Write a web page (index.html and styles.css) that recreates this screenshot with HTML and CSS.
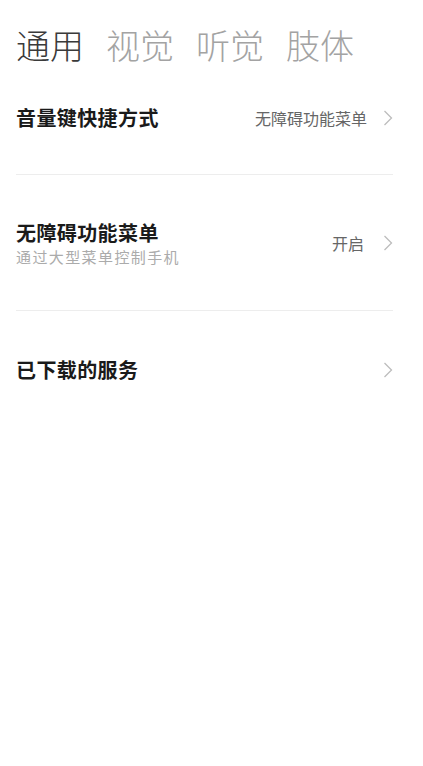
FILE: index.html
```html
<!DOCTYPE html>
<html lang="zh-CN">
<head>
<meta charset="utf-8">
<title>无障碍</title>
<link rel="stylesheet" href="styles.css">
</head>
<body>
<div class="page">
  <nav class="tabs">
    <span class="tab active">通用</span>
    <span class="tab">视觉</span>
    <span class="tab">听觉</span>
    <span class="tab">肢体</span>
  </nav>
  <div class="list">
    <div class="row row-first">
      <div class="text">
        <div class="title">音量键快捷方式</div>
      </div>
      <div class="right">
        <span class="value">无障碍功能菜单</span>
        <svg class="chev" width="10" height="16" viewBox="0 0 10 16"><path d="M1.5 1 L8.5 8 L1.5 15" fill="none" stroke="#bdbdbd" stroke-width="1.3"/></svg>
      </div>
    </div>
    <div class="row row-two">
      <div class="text">
        <div class="title">无障碍功能菜单</div>
        <div class="sub">通过大型菜单控制手机</div>
      </div>
      <div class="right">
        <span class="value">开启</span>
        <svg class="chev" width="10" height="16" viewBox="0 0 10 16"><path d="M1.5 1 L8.5 8 L1.5 15" fill="none" stroke="#bdbdbd" stroke-width="1.3"/></svg>
      </div>
    </div>
    <div class="row row-last">
      <div class="text">
        <div class="title">已下载的服务</div>
      </div>
      <div class="right">
        <svg class="chev" width="10" height="16" viewBox="0 0 10 16"><path d="M1.5 1 L8.5 8 L1.5 15" fill="none" stroke="#bdbdbd" stroke-width="1.3"/></svg>
      </div>
    </div>
  </div>
</div>
</body>
</html>
```
FILE: styles.css
```css
html, body {
  margin: 0;
  padding: 0;
  background: #ffffff;
}
body {
  font-family: "Noto Sans CJK SC", "Noto Sans", sans-serif;
  color: #1a1a1a;
}
.page {
  padding: 0 30px 0 16px;
}
.tabs {
  display: flex;
  gap: 22px;
  padding-top: 25px;
  font-size: 34px;
  line-height: 40px;
  font-weight: 300;
}
.tab {
  color: #a3a3a3;
}
.tab.active {
  color: #3a3a3a;
}
.list {
  display: flex;
  flex-direction: column;
}
.row {
  display: flex;
  align-items: center;
  justify-content: space-between;
  border-bottom: 1px solid #ededed;
}
.row-first {
  padding: 39px 0 42px;
}
.row-two {
  padding: 44px 0 43px;
}
.row-last {
  padding: 45px 0 44px;
  border-bottom: none;
}
.title {
  font-size: 20px;
  line-height: 28px;
  font-weight: 600;
  letter-spacing: 0.4px;
  color: #1a1a1a;
}
.sub {
  font-size: 15px;
  line-height: 20px;
  letter-spacing: 1.4px;
  color: #ababab;
}
.right {
  display: flex;
  align-items: center;
  gap: 16px;
}
.value {
  font-size: 16px;
  color: #666666;
}
.row-two .value {
  margin-right: 3px;
}
.chev {
  display: block;
}
```
